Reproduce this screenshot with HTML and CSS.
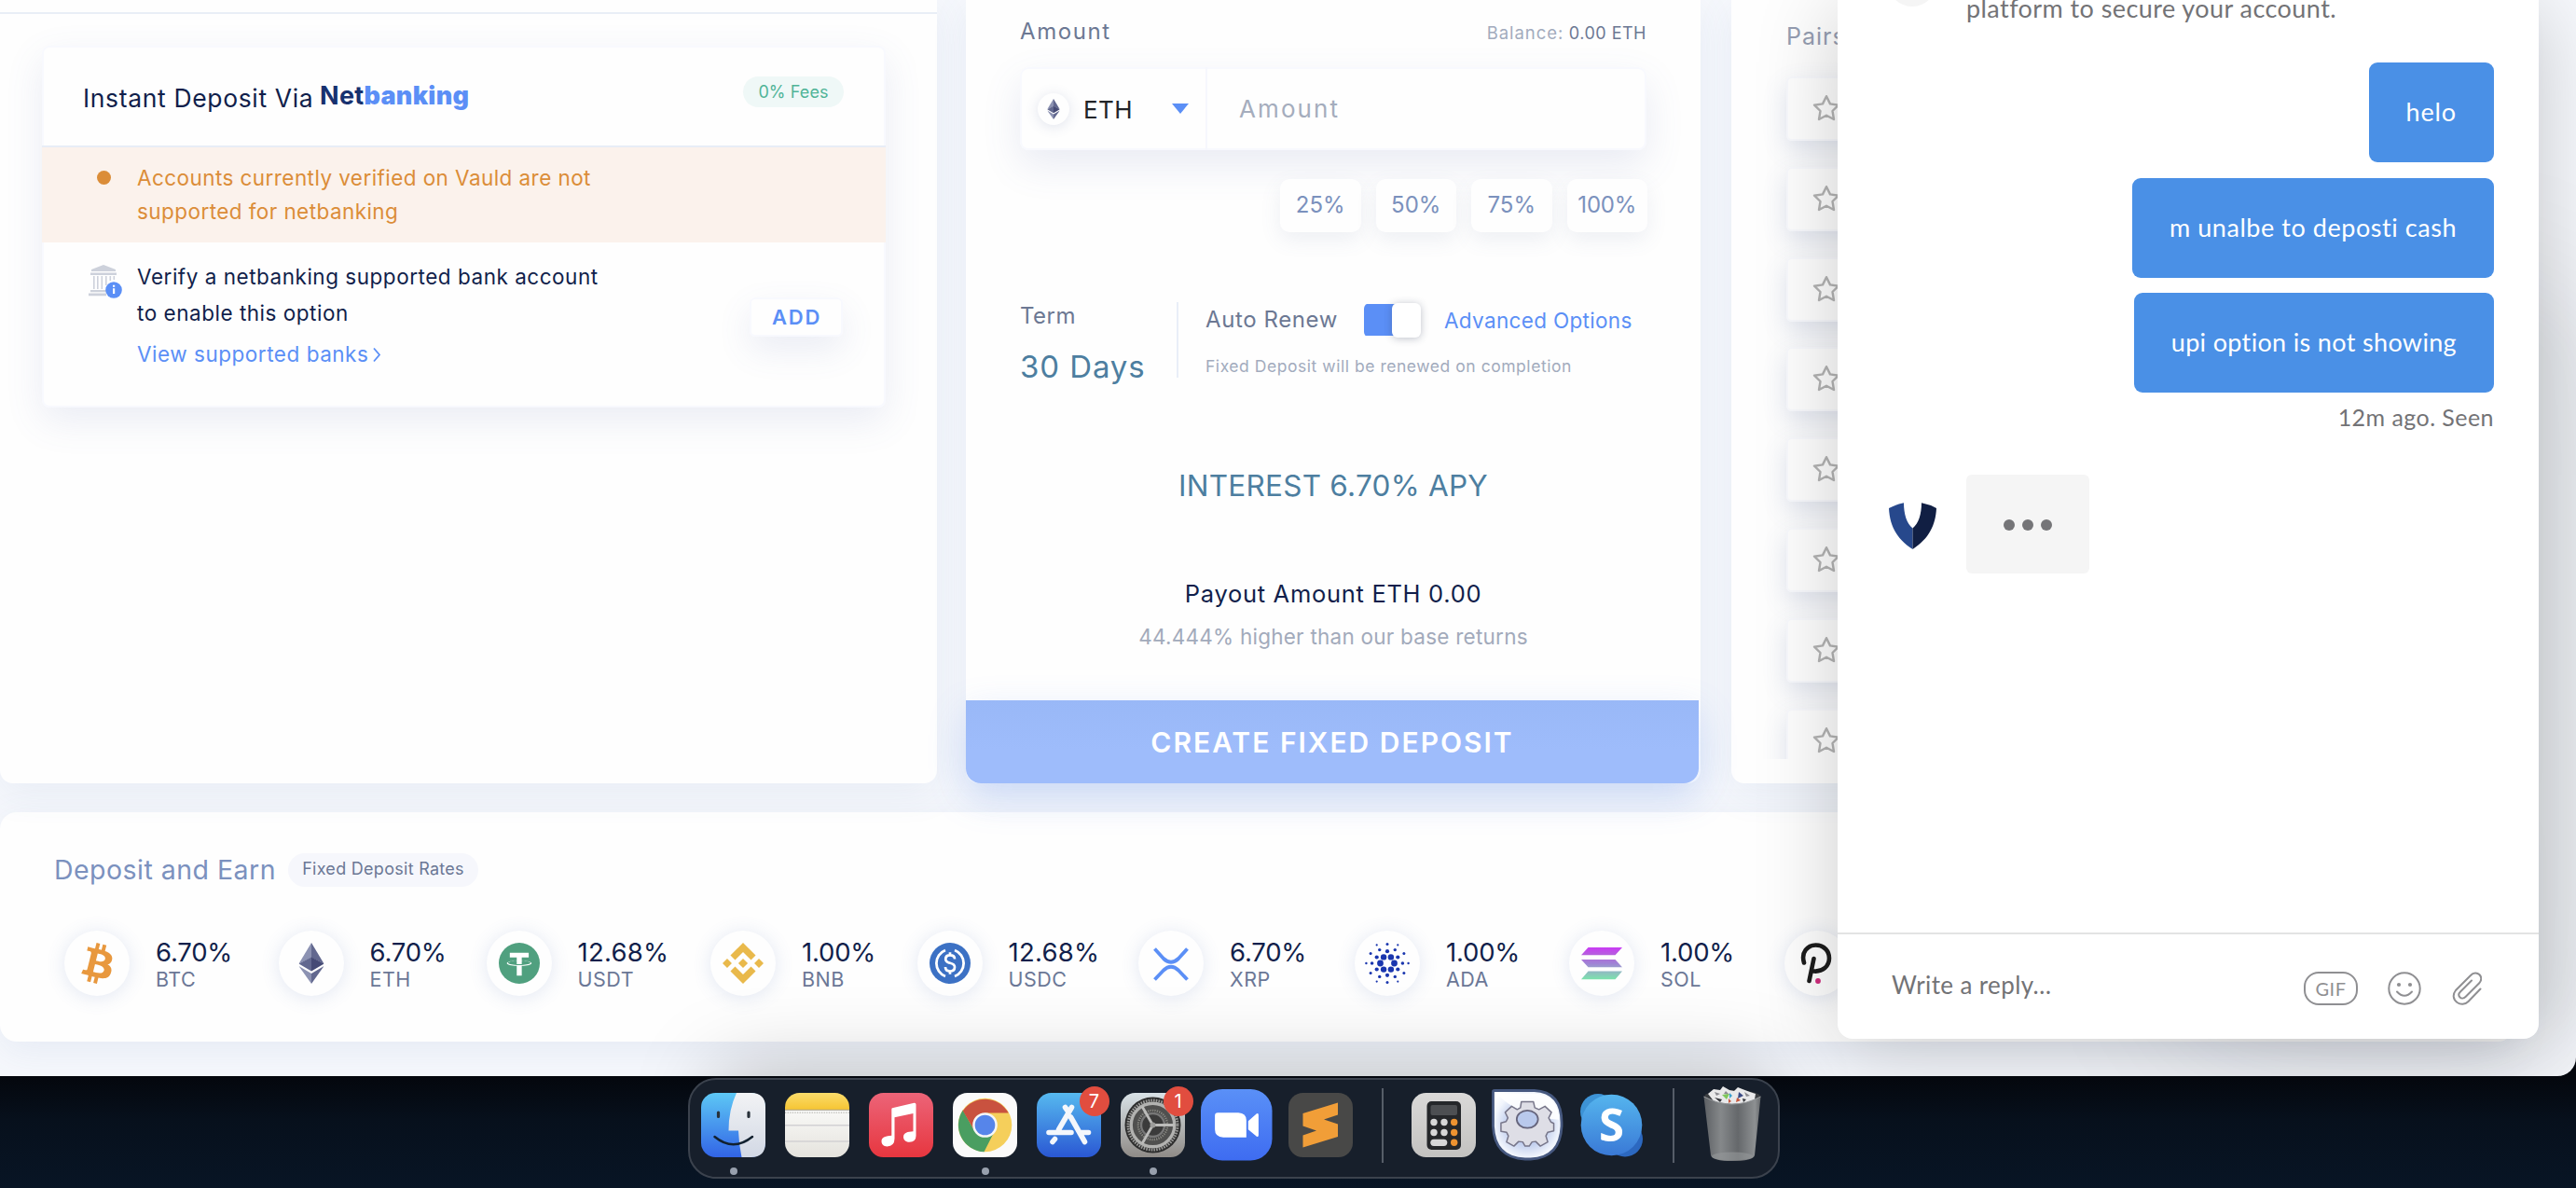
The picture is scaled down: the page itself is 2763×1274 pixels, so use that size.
FILE: index.html
```html
<!DOCTYPE html>
<html lang="en">
<head>
<meta charset="utf-8">
<title>Vauld</title>
<link rel="stylesheet" href="styles.css">
</head>
<body>
<svg class="defs" width="0" height="0" aria-hidden="true">
  <defs>
    <symbol id="eth" viewBox="0 0 27 44">
      <path fill="#8c92b2" d="M13.5 0 0 22.5 13.5 16z"/>
      <path fill="#62688f" d="M13.5 0 27 22.5 13.5 16z"/>
      <path fill="#62688f" d="M0 22.5 13.5 15.5V30.5z"/>
      <path fill="#454a75" d="M27 22.5 13.5 15.5V30.5z"/>
      <path fill="#8c92b2" d="M0 25 13.5 33V44z"/>
      <path fill="#62688f" d="M27 25 13.5 33V44z"/>
    </symbol>
    <symbol id="star" viewBox="0 0 30 30">
      <path fill="none" stroke="#b4b4b4" stroke-width="2.4" stroke-linejoin="round" d="M15 2.2 19 10.4 28 11.7 21.5 18 23 27 15 22.7 7 27 8.5 18 2 11.7 11 10.4z"/>
    </symbol>
  </defs>
</svg>

<div class="window">
  <main class="columns">
    <section class="panel deposit">
      <div class="tabs-edge"></div>
      <div class="netbank">
        <header class="netbank-head">
          <h2 class="netbank-title">Instant Deposit Via</h2>
          <span class="netbank-brand">Net<b>banking</b></span>
          <span class="fees">0% Fees</span>
        </header>
        <div class="notice"><i class="notice-dot"></i><p>Accounts currently verified on Vauld are not<br>supported for netbanking</p></div>
        <div class="verify">
          <svg class="bank" viewBox="0 0 36 36">
            <g fill="#cdd1db"><path d="M16 0 29 5v2H3V5z"/><path d="M2 8.5h28v2.5H2z"/><path d="M5 12h1.6v14H5zM9 12h1.6v14H9zM13.5 12h1.6v14h-1.6zM18 12h1.6v10H18zM22.5 12h1.6v5h-1.6zM26.5 12h1.6v4h-1.6z"/><path d="M2 27h17v2.3H2zM0 30.6h19v2.6H0z"/></g>
            <circle cx="27" cy="27" r="8.8" fill="#5b8ff6"/><path d="M26 25.3h2.2V31H26zM26 21.8h2.2v2H26z" fill="#fff"/>
          </svg>
          <div class="verify-body">
            <p>Verify a netbanking supported bank account<br>to enable this option</p>
            <a class="view">View supported banks<svg viewBox="0 0 10 16"><path d="M2 1l6 7-6 7" fill="none" stroke="#5b8ff6" stroke-width="1.8"/></svg></a>
          </div>
          <button class="add">ADD</button>
        </div>
      </div>
    </section>

    <section class="panel fixed">
      <div class="fixed-body">
        <div class="amount-row"><span class="label amount-label">Amount</span><span class="balance"><i>Balance:</i> 0.00 ETH</span></div>
        <div class="amount-box">
          <div class="coin-select">
            <span class="coin-mini"><svg viewBox="0 0 27 44"><use href="#eth"/></svg></span>
            <span class="coin-name">ETH</span><i class="caret"></i>
          </div>
          <span class="placeholder">Amount</span>
        </div>
        <div class="pcts"><span>25%</span><span>50%</span><span>75%</span><span class="full">100%</span></div>
        <div class="term-row">
          <div class="term"><span class="label term-label">Term</span><span class="days">30 Days</span></div>
          <div class="renew">
            <div class="renew-top"><span class="label renew-label">Auto Renew</span><span class="toggle"><i></i></span><a class="advanced">Advanced Options</a></div>
            <p class="renew-note">Fixed Deposit will be renewed on completion</p>
          </div>
        </div>
        <p class="interest">INTEREST 6.70% APY</p>
        <p class="payout">Payout Amount ETH 0.00</p>
        <p class="higher">44.444% higher than our base returns</p>
      </div>
      <button class="create">CREATE FIXED DEPOSIT</button>
    </section>

    <section class="panel pairs">
      <p class="pairs-title">Pairs</p>
      <div class="pair-list">
        <div class="pair"><svg><use href="#star"/></svg></div>
        <div class="pair"><svg><use href="#star"/></svg></div>
        <div class="pair"><svg><use href="#star"/></svg></div>
        <div class="pair"><svg><use href="#star"/></svg></div>
        <div class="pair"><svg><use href="#star"/></svg></div>
        <div class="pair"><svg><use href="#star"/></svg></div>
        <div class="pair"><svg><use href="#star"/></svg></div>
        <div class="pair"><svg><use href="#star"/></svg></div>
      </div>
    </section>
  </main>

  <section class="earn">
    <header class="earn-head"><h2>Deposit and Earn</h2><span>Fixed Deposit Rates</span></header>
    <div class="coins">
      <div class="coin"><span class="disc"><svg viewBox="5.8 6 20 20"><path fill="#e8983e" d="M23.189 14.02c.314-2.096-1.283-3.223-3.465-3.975l.708-2.84-1.728-.43-.69 2.765c-.454-.114-.92-.22-1.385-.326l.695-2.783L15.596 6l-.708 2.839c-.376-.086-.746-.17-1.104-.26l.002-.009-2.384-.595-.46 1.846s1.283.294 1.256.312c.7.175.826.638.805 1.006l-.806 3.235c.048.012.11.03.18.057l-.183-.045-1.13 4.532c-.086.212-.303.531-.793.41.018.025-1.256-.313-1.256-.313l-.858 1.978 2.25.561c.418.105.828.215 1.231.318l-.715 2.872 1.727.43.708-2.84c.472.127.93.245 1.378.357l-.706 2.828 1.728.43.715-2.866c2.948.558 5.164.333 6.097-2.333.752-2.146-.037-3.385-1.588-4.192 1.13-.26 1.98-1.003 2.207-2.538zm-3.95 5.538c-.533 2.147-4.148.986-5.32.695l.95-3.805c1.172.293 4.929.872 4.37 3.11zm.535-5.569c-.487 1.953-3.495.96-4.47.717l.86-3.45c.975.243 4.118.696 3.61 2.733z"/></svg></span><p><b class="r4">6.70%</b><span>BTC</span></p></div>
      <div class="coin"><span class="disc"><svg viewBox="0 0 27 44"><use href="#eth"/></svg></span><p><b class="r4">6.70%</b><span>ETH</span></p></div>
      <div class="coin"><span class="disc"><svg viewBox="0 0 32 32"><circle cx="16" cy="16" r="16" fill="#50a07f"/><path fill="#fff" d="M17.922 17.383v-.002c-.11.008-.677.042-1.942.042-1.01 0-1.721-.03-1.971-.042v.003c-3.888-.171-6.79-.848-6.79-1.658 0-.809 2.902-1.486 6.79-1.66v2.644c.254.018.982.061 1.988.061 1.207 0 1.812-.05 1.925-.06v-2.643c3.88.173 6.775.85 6.775 1.658 0 .81-2.895 1.485-6.775 1.657m0-3.59v-2.366h5.414V7.819H8.595v3.608h5.414v2.365c-4.4.202-7.709 1.074-7.709 2.118 0 1.044 3.309 1.915 7.709 2.118v7.582h3.913v-7.584c4.393-.202 7.694-1.073 7.694-2.116 0-1.043-3.301-1.914-7.694-2.117"/></svg></span><p><b class="r5">12.68%</b><span>USDT</span></p></div>
      <div class="coin"><span class="disc"><svg viewBox="6 6 20 20"><path fill="#e9b94b" d="M12.116 14.404L16 10.52l3.886 3.886 2.26-2.26L16 6l-6.144 6.144 2.26 2.26zM6 16l2.26-2.26L10.52 16l-2.26 2.26L6 16zm6.116 1.596L16 21.48l3.886-3.886 2.26 2.259L16 26l-6.144-6.144-.003-.003 2.263-2.257zM21.48 16l2.26-2.26L26 16l-2.26 2.26L21.48 16zM16 13.7l2.3 2.3-2.3 2.3-2.3-2.3z"/></svg></span><p><b class="r4">1.00%</b><span>BNB</span></p></div>
      <div class="coin"><span class="disc"><svg viewBox="0 0 44 44"><circle cx="22" cy="22" r="22" fill="#3c71c4"/><path d="M17 8a15 15 0 0 0 0 28M27 8a15 15 0 0 1 0 28" fill="none" stroke="#fff" stroke-width="2.8"/><path d="M27 17.5C27 14.5 24.8 13.4 22 13.4S17.2 15 17.2 17.6C17.2 23.6 27 20 27 26C27 29 24.8 30.5 22 30.5S17 29 17 26M22 10.2V13.5M22 30.5V33.8" fill="none" stroke="#fff" stroke-width="2.7"/></svg></span><p><b class="r5">12.68%</b><span>USDC</span></p></div>
      <div class="coin"><span class="disc"><svg viewBox="0 0 44 44"><path d="M4.5 6.5 14 17Q22 24.5 30 17L39.5 6.500M4.5 39.5 14 29.5Q22 22 30 29.5L39.5 39.5" fill="none" stroke="#5b8ff6" stroke-width="3.8"/></svg></span><p><b class="r4">6.70%</b><span>XRP</span></p></div>
      <div class="coin"><span class="disc"><svg viewBox="-24 -22 48 44" class="wide"><g fill="#1a36ae"><circle cx="-7.5" r="3.4"/><circle cx="7.5" r="3.4"/><circle cx="-3.9" cy="-6.6" r="3.2"/><circle cx="3.9" cy="-6.6" r="3.2"/><circle cx="-3.9" cy="6.6" r="3.2"/><circle cx="3.9" cy="6.6" r="3.2"/><circle cx="-11.3" cy="-6.5" r="2.1"/><circle cx="11.3" cy="-6.5" r="2.1"/><circle cx="-11.3" cy="6.5" r="2.1"/><circle cx="11.3" cy="6.5" r="2.1"/><circle cy="-12.8" r="2.1"/><circle cy="12.8" r="2.1"/><circle cx="-16.4" r="1.8"/><circle cx="16.4" r="1.8"/><circle cx="-8.3" cy="-14.4" r="1.7"/><circle cx="8.3" cy="-14.4" r="1.7"/><circle cx="-8.3" cy="14.4" r="1.7"/><circle cx="8.3" cy="14.4" r="1.7"/><circle cx="-17.9" cy="-10.4" r="1.5"/><circle cx="17.9" cy="-10.4" r="1.5"/><circle cx="-17.9" cy="10.4" r="1.5"/><circle cx="17.9" cy="10.4" r="1.5"/><circle cy="-20.5" r="1.5"/><circle cy="20.5" r="1.5"/><circle cx="-22.6" r="1.2"/><circle cx="22.6" r="1.2"/><circle cx="-11.3" cy="-19.6" r="1.1"/><circle cx="11.3" cy="-19.6" r="1.1"/><circle cx="-11.3" cy="19.6" r="1.1"/><circle cx="11.3" cy="19.6" r="1.1"/></g></svg></span><p><b class="r4">1.00%</b><span>ADA</span></p></div>
      <div class="coin"><span class="disc"><svg viewBox="0 0 44 44"><defs><linearGradient id="sol" x1="0" y1="0" x2="0" y2="1"><stop offset="0" stop-color="#c93af4"/><stop offset=".28" stop-color="#b169d8"/><stop offset=".5" stop-color="#a081d6"/><stop offset=".72" stop-color="#95b3c6"/><stop offset="1" stop-color="#7be3ac"/></linearGradient></defs><path fill="url(#sol)" d="M7.5 5H44l-7.5 8.300H0zM0 18h36.500L44 26.200H7.500zM7.500 30.500H44L36.500 39.200H0z"/></svg></span><p><b class="r4">1.00%</b><span>SOL</span></p></div>
      <div class="coin"><span class="disc"><svg viewBox="0 0 44 44"><path d="M8 21.5C4.5 10 12 2.5 20.5 2.5C30 2.5 35 9.5 35 16.5C35 25 28 31.5 18.5 30.500M18.500 17 13.500 41" fill="none" stroke="#1c1c1c" stroke-width="4.6" stroke-linecap="round"/><circle cx="23" cy="41" r="2.9" fill="#cf2c7c"/></svg></span></div>
    </div>
  </section>

  <div class="dock-shade"></div>
  <div class="chat-glow"></div>

  <aside class="chat">
    <div class="thread">
      <div class="msg-in">platform to secure your account.</div>
      <i class="old-avatar"></i>
      <div class="bubble b1">helo</div>
      <div class="bubble b2">m unalbe to deposti cash</div>
      <div class="bubble b3">upi option is not showing</div>
      <div class="seen">12m ago. Seen</div>
      <div class="typing-row">
        <svg class="vlogo" viewBox="0 0 51 49" preserveAspectRatio="none"><path fill="#27488c" d="M0 6Q7 2 16 .3C16 12 19 22 25.500 27V49C8 38 1 24 0 6z"/><path fill="#111f43" d="M51 6Q44 2 35 .3C35 12 32 22 25.500 27V49C43 38 50 24 51 6z"/></svg>
        <div class="typing"><i></i><i></i><i></i></div>
      </div>
    </div>
    <footer class="reply">
      <span class="reply-text">Write a reply…</span>
      <span class="gif">GIF</span>
      <svg class="smile" viewBox="0 0 36 36"><g fill="none" stroke="#8f8f92" stroke-width="2"><circle cx="18" cy="18" r="16.7"/><path d="M10 21.5Q18 30 26 21.5" stroke-linecap="round"/></g><circle cx="12" cy="14" r="2.1" fill="#8f8f92"/><circle cx="24" cy="14" r="2.1" fill="#8f8f92"/></svg>
      <svg class="clip" viewBox="0 0 32 36"><path d="M30.5 18.5 17.5 32C14 35.5 9 35.5 5.5 33C1 29.5 .5 24.5 4 20L20 4C23 .8 27 .8 29.5 3.3C32 6 31.6 9.5 29 12.5L14.5 27C12.5 29 10 29 8.5 27.5C7 26 7 23.5 9 21.5L21 9.5" fill="none" stroke="#8f8f92" stroke-width="2" stroke-linecap="round"/></svg>
    </footer>
  </aside>
</div>

<nav class="dock">
  <div class="slot run"><svg class="app" viewBox="0 0 69 69"><defs><linearGradient id="fb" x1="0" y1="0" x2="0" y2="1"><stop offset="0" stop-color="#5dc8f5"/><stop offset="1" stop-color="#3264e6"/></linearGradient><linearGradient id="fw" x1="0" y1="0" x2="0" y2="1"><stop offset="0" stop-color="#f2f3f5"/><stop offset="1" stop-color="#d2d8e4"/></linearGradient></defs><rect width="69" height="69" rx="15.5" fill="url(#fb)"/><path fill="url(#fw)" d="M38 0H53.500Q69 0 69 15.500V53.500Q69 69 53.500 69H43.500Q40.500 55 40 40.500H29.500Q29.500 18 38 0z"/><path d="M18.500 21v4.500M51 21v4.500" stroke="#283139" stroke-width="3.2" stroke-linecap="round"/><path d="M14.500 47Q34.500 63.500 55 47" fill="none" stroke="#12212f" stroke-width="2.5" stroke-linecap="round"/></svg></div>
  <div class="slot"><svg class="app" viewBox="0 0 69 69"><defs><clipPath id="rc"><rect width="69" height="69" rx="15.5"/></clipPath><linearGradient id="ny" x1="0" y1="0" x2="0" y2="1"><stop offset="0" stop-color="#fbdc6b"/><stop offset="1" stop-color="#f6c533"/></linearGradient><linearGradient id="nw" x1="0" y1="0" x2="0" y2="1"><stop offset="0" stop-color="#f9f9f7"/><stop offset="1" stop-color="#e5e3dd"/></linearGradient></defs><g clip-path="url(#rc)"><path fill="url(#nw)" d="M0 17h69v52H0z"/><path fill="url(#ny)" d="M0 0h69v18H0z"/><path stroke="#a9a18a" d="M0 18.300h69"/><path stroke="#c4c3bf" stroke-width="1.4" stroke-dasharray="1.3 1.3" d="M0 21.300h69"/><path stroke="#d2d1d3" stroke-width="1.4" d="M0 34.700h69M0 52h69"/></g></svg></div>
  <div class="slot"><svg class="app" viewBox="0 0 69 69"><defs><linearGradient id="mu" x1="0" y1="0" x2="0" y2="1"><stop offset="0" stop-color="#ec6478"/><stop offset="1" stop-color="#e7363f"/></linearGradient></defs><rect width="69" height="69" rx="15.5" fill="url(#mu)"/><path fill="#fff" d="M25 16.200 48.500 10.700Q50.500 10.400 50.500 12.400V46Q50.500 52.500 43.500 52.700C39 52.700 37 50 37 47.200C37 42.500 41.500 41.600 47.500 41.200V22L27.500 26.200V49Q27.500 57 19.500 57.400C15.500 57.400 13.500 55 13.500 52C13.500 47 18.500 46.300 24.300 45.700V18Q24.300 16.500 25 16.200z"/></svg></div>
  <div class="slot run"><svg class="app" viewBox="0 0 69 69"><rect width="69" height="69" rx="15.5" fill="#fafafa"/><circle cx="34.5" cy="34.5" r="28.8" fill="#f5cf5b"/><path fill="#4a9e61" d="M34.500 34.500 44.300 42 33.500 63.300A28.800 28.800 0 0 1 10.800 18.500L23.300 41z"/><path fill="#c9523f" d="M10.800 19.200A28.800 28.800 0 0 1 59.700 21.500H34.500L23 40z"/><circle cx="34.5" cy="34.5" r="13.3" fill="#f6f6f6"/><circle cx="34.5" cy="34.5" r="10.8" fill="#5685ea"/></svg></div>
  <div class="slot"><svg class="app" viewBox="0 0 69 69"><defs><linearGradient id="as" x1="0" y1="0" x2="0" y2="1"><stop offset="0" stop-color="#56b9ef"/><stop offset="1" stop-color="#2a57d3"/></linearGradient></defs><rect width="69" height="69" rx="15.5" fill="url(#as)"/><g stroke="#f4f7fc" stroke-width="5.6" stroke-linecap="round"><path d="M37.500 15.500 23.500 39.500M30.500 15.500 33 19M36.500 26 51.500 52.500M13 42.500H37M46 42.500H55.500M19.500 49.500 17 52.500"/></g></svg><em class="badge">7</em></div>
  <div class="slot run"><svg class="app" viewBox="0 0 69 69"><defs><linearGradient id="st" x1="0" y1="0" x2="0" y2="1"><stop offset="0" stop-color="#d9e2e7"/><stop offset="1" stop-color="#8f8b87"/></linearGradient></defs><rect width="69" height="69" rx="15.5" fill="url(#st)"/><circle cx="34.5" cy="34.5" r="30" fill="#2e2e2e"/><circle cx="34.5" cy="34.5" r="26.5" fill="none" stroke="#9a9a98" stroke-width="3" stroke-dasharray="1.6 1.17"/><circle cx="34.5" cy="34.5" r="23.3" fill="#50504f" stroke="#b2b2b0" stroke-width="3.4"/><circle cx="34.5" cy="34.5" r="15.5" fill="#3b3b3b" stroke="#84847f" stroke-width="2.6" stroke-dasharray="1.4 1"/><circle cx="34.5" cy="34.5" r="12.5" fill="none" stroke="#777" stroke-width="2.4"/><path d="M34.500 34.500 23 14.500M34.500 34.500H57.800M34.500 34.500 23 54.500" stroke="#bcbcba" stroke-width="2.8"/><circle cx="34.5" cy="34.5" r="3" fill="#9c9c9a"/></svg><em class="badge">1</em></div>
  <div class="slot"><svg class="app big" viewBox="0 0 76 76"><defs><linearGradient id="zo" x1="0" y1="0" x2="0" y2="1"><stop offset="0" stop-color="#5a90f7"/><stop offset="1" stop-color="#3e6cf1"/></linearGradient></defs><rect width="76" height="76" rx="23" fill="url(#zo)"/><path fill="#fff" d="M18 25H40Q48.500 25.500 48.500 33V51.500H24Q15 51 15 43V28Q15 25 18 25zM50.500 34 59.500 26Q61.500 25 61.500 27.500V49Q61.500 51.500 59.500 50.500L50.500 43z"/></svg></div>
  <div class="slot"><svg class="app" viewBox="0 0 69 69"><rect width="69" height="69" rx="15.5" fill="#484847"/><path fill="#d9832a" d="M30 40.500 53 47V44L38 38z"/><path fill="#f19e38" d="M15.500 22 53 10.500V23.500L38 28.500 53 33.500V47L15.500 58.500V45.500L30 40.500 15.500 35.500z"/></svg></div>
  <i class="sep"></i>
  <div class="slot"><svg class="app" viewBox="0 0 69 69"><defs><linearGradient id="ca" x1="0" y1="0" x2="0" y2="1"><stop offset="0" stop-color="#dad9d8"/><stop offset="1" stop-color="#c3c2c0"/></linearGradient></defs><rect width="69" height="69" rx="15.5" fill="url(#ca)"/><rect x="16.5" y="9" width="36.5" height="52" rx="5" fill="#25272a"/><rect x="20.5" y="13" width="28.5" height="11" rx="2" fill="#4d4f52"/><g fill="#d7d7d7"><circle cx="24" cy="31.5" r="3.7"/><circle cx="35" cy="31.5" r="3.7"/><circle cx="24" cy="42.5" r="3.7"/><circle cx="35" cy="42.5" r="3.7"/><rect x="20.3" y="49.7" width="18" height="7.2" rx="3.6"/></g><g fill="#ee9330"><circle cx="45.7" cy="31.5" r="3.7"/><circle cx="45.7" cy="42.5" r="3.7"/><circle cx="45.7" cy="53.3" r="3.7"/></g></svg></div>
  <div class="slot"><svg class="app big" viewBox="0 0 77 77"><defs><radialGradient id="gb" cx=".5" cy=".5" r=".6"><stop offset=".35" stop-color="#aebfe8"/><stop offset=".8" stop-color="#f1f5fc"/><stop offset="1" stop-color="#fff"/></radialGradient></defs><path d="M1.500 3Q1.500 1.500 3 1.500H46Q75.500 3 75.500 36V40Q74 74 42 75.500H36Q3 74 1.500 40z" fill="url(#gb)" stroke="#46587f" stroke-width="2.8"/><path fill="#fff" d="M4.500 4.500H45Q72 6 72.500 33Q30 30 4.500 4.500z" opacity=".9"/><path fill="#dedee6" stroke="#77768a" stroke-width="1.5" stroke-linejoin="round" d="M32 13.500H45L46.500 20 51 22 57.500 18.500 64.500 25 61.500 31 64 35.500 67 37V45L60.500 46.500 58.500 50.500 60.500 57 52.500 61.500 47.500 56.500 43.500 57 40.500 61.500H36L33.500 57 29 56.500 24 61.500 16 57 18 50.500 16 46.500 10 45.500V36.500L15.500 35 17.500 31 14.500 25 21.500 18.500 27.500 22 31 20z"/><ellipse cx="38.5" cy="32.5" rx="11.5" ry="9.5" fill="#b9c9ec" stroke="#66657c" stroke-width="1.8"/></svg></div>
  <div class="slot"><svg class="app" viewBox="0 0 69 69"><defs><linearGradient id="sk" x1="0" y1="0" x2="0" y2="1"><stop offset="0" stop-color="#55b5ee"/><stop offset="1" stop-color="#3a79d6"/></linearGradient></defs><circle cx="20" cy="20" r="19" fill="#3d93d6"/><circle cx="49" cy="49.5" r="19" fill="#2c68c0"/><circle cx="34.5" cy="34.5" r="32.8" fill="url(#sk)"/><text x="34.5" y="52" text-anchor="middle" class="skype-s">S</text></svg></div>
  <i class="sep"></i>
  <div class="slot last"><svg class="trash" viewBox="0 0 62 80"><defs><linearGradient id="tr" x1="0" y1="0" x2="1" y2="0"><stop offset="0" stop-color="#5d6064"/><stop offset=".3" stop-color="#85888a"/><stop offset=".6" stop-color="#65686b"/><stop offset=".9" stop-color="#8d9092"/><stop offset="1" stop-color="#66696c"/></linearGradient></defs><ellipse cx="31" cy="11" rx="30" ry="7" fill="#3a3d41"/><path fill="#e9e9ea" d="M5 8 11 3 18 4 21 0 28 4 33 5 37 1 42 3 50 6 56 8 55 14 45 18 30 19 12 17z"/><path fill="#8b8b90" d="M12 6 18 8 14 10zM24 5 28 9 22 8zM44 6 50 10 46 11z"/><path fill="#3b4b83" d="M38 6 43 10 37 13z"/><path fill="#7fc85c" d="M20 9 28 8 25 14z"/><path fill="#38a0d0" d="M28 7 31 10 28 13z"/><path fill="#c8583d" d="M36 12 40 15 35 17zM27 13 30 16 27 18z"/><path fill="#33353a" d="M12 12 20 14 18 17zM42 13 46 14 43 17z"/><path fill="url(#tr)" d="M.5 11Q31 27 61.500 11L55 74Q53 80 31 80Q10 80 8 74z"/><path d="M.5 11Q31 27 61.500 11" fill="none" stroke="#9a9da0"/><ellipse cx="31" cy="75" rx="22" ry="4.5" fill="#94979a" opacity=".6"/></svg></div>
</nav>
</body>
</html>
```

FILE: styles.css
```css
* { box-sizing: border-box; margin: 0; padding: 0; }
i, em { font-style: normal; }

body {
  width: 2763px;
  height: 1274px;
  overflow: hidden;
  position: relative;
  font-family: Inter, "Liberation Sans", sans-serif;
  color: #111f4b;
  background: linear-gradient(#04070d 1154px, #07101c 1200px, #081525 1274px);
  white-space: nowrap;
}
button { font: inherit; border: 0; }
.defs { position: absolute; }

.window {
  position: relative;
  height: 1154px;
  overflow: hidden;
  background: #f6f8fc;
  border-radius: 0 0 20px 0;
}

/* dashboard columns */
.columns {
  display: grid;
  grid-template-columns: 1005px 788px 840px;
  column-gap: 31px;
  height: 840px;
}
.panel { background: #fefefe; border-radius: 0 0 14px 14px; box-shadow: 0 10px 40px rgba(90, 120, 180, .09); }
.panel.pairs { margin-left: 2px; }

.tabs-edge { height: 15px; border-bottom: 2px solid #e9eef6; }
.netbank {
  margin: 34px 55px 0 45px;
  height: 388px;
  border-radius: 8px;
  background: #fefefe;
  box-shadow: 0 0 0 2px #f8f9fe inset, 0 14px 40px rgba(90, 110, 170, .12);
}
.netbank-head {
  display: flex;
  align-items: flex-start;
  height: 109px;
  padding: 33px 45px 0 44px;
  border-bottom: 2px solid #e8edf7;
}
.netbank-title { font-size: 26.5px; line-height: 36px; font-weight: 400; letter-spacing: .65px; margin-top: 5px; width: 254px; }
.netbank-brand { font-size: 27px; line-height: 36px; font-weight: 700; letter-spacing: .3px; color: #17316f; margin-top: 3px; }
.netbank-brand b { color: #5b8ff6; }
.fees {
  margin-left: auto;
  width: 108px;
  height: 33px;
  border-radius: 17px;
  background: #eff8f7;
  color: #4fb498;
  font-size: 18px;
  line-height: 33px;
  letter-spacing: .1px;
  text-align: center;
}
.notice {
  display: flex;
  height: 102px;
  padding: 15px 0 0 59px;
  gap: 28px;
  background: #fbf2ec;
  color: #db8d38;
  font-size: 22.5px;
  line-height: 36px;
  letter-spacing: .43px;
}
.notice-dot { width: 15px; height: 15px; margin-top: 10px; border-radius: 50%; background: #db8d38; }
.verify { display: flex; padding: 17px 46px 0 50px; }
.bank { width: 36px; height: 36px; margin-top: 7px; }
.verify-body { margin-left: 16px; font-size: 22.5px; line-height: 39px; letter-spacing: .52px; }
.view { display: flex; align-items: center; margin-top: 7px; line-height: 36px; color: #5b8ff6; }
.view svg { width: 10px; height: 17px; margin-left: 4px; }
.add {
  margin: 42px 0 0 auto;
  width: 100px;
  height: 42px;
  border-radius: 6px;
  background: #fefefe;
  box-shadow: 0 0 0 2px #f8f9fe inset, 0 14px 36px rgba(90, 110, 170, .12);
  color: #5b8ff6;
  font-size: 22px;
  font-weight: 600;
  letter-spacing: 1.8px;
  text-indent: 1px;
}

/* fixed deposit form */
.fixed { position: relative; display: flex; flex-direction: column; }
.fixed-body { height: 751px; padding: 19px 58px 0; }
.label { color: #6c7893; font-size: 24px; line-height: 30px; }
.amount-row { display: flex; justify-content: space-between; align-items: baseline; height: 30px; }
.amount-label { letter-spacing: 1.6px; }
.balance { font-size: 18px; letter-spacing: .5px; color: #6c7893; }
.balance i { color: #a2abbd; font-size: 18.5px; letter-spacing: .95px; }
.amount-box {
  display: flex;
  align-items: center;
  height: 89px;
  margin-top: 23px;
  border-radius: 9px;
  background: #fefefe;
  box-shadow: 0 0 0 2px #f8f9fe inset, 0 16px 40px rgba(90, 110, 170, .13);
}
.coin-select { display: flex; align-items: center; width: 201px; height: 89px; padding: 0 18px 0 19px; border-right: 2px solid #f6f7fd; }
.coin-mini { display: flex; justify-content: center; align-items: center; width: 34px; height: 34px; border-radius: 50%; box-shadow: 0 2px 14px rgba(70, 90, 140, .16); }
.coin-mini svg { width: 14px; height: 22px; }
.coin-name { margin-left: 15px; padding-top: 1px; font-size: 26px; letter-spacing: .4px; color: #222428; }
.caret { margin-left: auto; border: 9px solid transparent; border-top: 11px solid #5b8ff6; border-bottom: 0; }
.placeholder { margin-left: 34px; font-size: 26px; letter-spacing: 2.1px; color: #a5adbd; }
.pcts { display: flex; gap: 16px; justify-content: flex-end; height: 57px; margin: 31px -1px 0 0; }
.pcts span { width: 86.5px; border-radius: 10px; background: #fefefe; box-shadow: 0 8px 22px rgba(90, 110, 150, .10); font-size: 24px; line-height: 56px; text-align: center; color: #7b91bd; }
.pcts .full { letter-spacing: -.2px; }
.term-row { display: flex; height: 81px; margin-top: 75px; }
.term { width: 170px; height: 81px; border-right: 2px solid #e9eef8; display: flex; flex-direction: column; }
.term-label { letter-spacing: .5px; }
.days { margin-top: 19px; font-size: 33px; line-height: 40px; letter-spacing: .9px; color: #4d7ea0; }
.renew { margin-left: 29px; }
.renew-top { display: flex; align-items: center; height: 38px; }
.renew-label { letter-spacing: .6px; width: 170px; }
.toggle { width: 61px; height: 37px; display: flex; align-items: center; justify-content: flex-end; background: linear-gradient(#5b8ff6, #5b8ff6) 0 1px / 34px 34px no-repeat; border-radius: 6px; }
.toggle i { width: 31px; height: 37px; border-radius: 6px; background: #fff; box-shadow: 0 1px 8px rgba(40, 50, 80, .3); }
.advanced { margin-left: 25px; font-size: 22.5px; letter-spacing: .33px; color: #5b8ff6; }
.renew-note { margin-top: 19px; font-size: 17.5px; line-height: 24px; letter-spacing: .54px; color: #a2abbd; }
.interest, .payout, .higher { text-align: center; }
.interest { margin-top: 96px; font-size: 31.5px; line-height: 40px; letter-spacing: .25px; color: #4d7ea0; }
.payout { margin-top: 80px; font-size: 25.5px; line-height: 32px; letter-spacing: .7px; }
.higher { margin-top: 15px; font-size: 22.5px; line-height: 30px; letter-spacing: .24px; color: #a2aabb; }
.create {
  width: 786px;
  height: 89px;
  border-radius: 0 0 16px 16px;
  background: linear-gradient(#99b8f7, #9ebcfb 60%);
  box-shadow: 0 14px 40px rgba(91, 143, 246, .22);
  color: #fff;
  font-size: 30px;
  font-weight: 600;
  letter-spacing: 2px;
}

/* pairs list */
.pairs { padding: 23px 0 0 59px; }
.pairs-title { font-size: 25px; line-height: 32px; letter-spacing: 1px; color: #959db1; }
.pair-list { height: 759px; margin: 0 0 0 -40px; padding: 27px 0 0 40px; overflow: hidden; }
.pair { height: 69px; margin-bottom: 27.8px; padding: 19px 0 0 28px; border-radius: 6px 0 0 6px; background: #fefefe; box-shadow: 0 0 0 2px #f8f9fd inset, 0 10px 26px rgba(90, 110, 170, .17); }
.pair svg { display: block; width: 30px; height: 30px; }

/* deposit and earn */
.earn {
  height: 246px;
  margin-top: 31px;
  padding: 44px 0 0 58px;
  width: 2697px;
  border-radius: 18px;
  background: #fefefe;
  box-shadow: 0 10px 40px rgba(90, 120, 180, .10);
}
.earn-head { display: flex; height: 36px; }
.earn-head h2 { width: 251px; font-size: 28.5px; line-height: 36px; font-weight: 400; letter-spacing: .47px; color: #7b91be; }
.earn-head span { width: 204px; border-radius: 18px; background: #f6f7fc; font-size: 18px; line-height: 34px; letter-spacing: .28px; text-align: center; color: #6b7795; }
.coins { display: grid; grid-template-columns: 229.5px 223px 240.5px 221.5px 237.5px 232px 230px 231px 230px; margin: 47px 0 0 11px; }
.coin { display: flex; height: 70px; }
.disc { display: flex; align-items: center; justify-content: center; width: 70px; height: 70px; border-radius: 50%; background: #fefefe; box-shadow: 0 2px 20px rgba(80, 110, 180, .16); }
.disc svg { width: 44px; height: 44px; }
.disc .wide { width: 48px; }
.coin p { display: flex; flex-direction: column; margin: 7px 0 0 28px; }
.coin b { font-size: 27.5px; line-height: 33px; font-weight: 400; }
.r4 { letter-spacing: -.2px; }
.r5 { letter-spacing: .25px; }
.coin p span { font-size: 21.5px; line-height: 25px; letter-spacing: .5px; color: #6b7796; }

/* soft shade thrown on the window by the dock and the chat launcher */
.dock-shade { position: absolute; left: 780px; top: 1160px; width: 1110px; height: 90px; box-shadow: 0 0 90px 8px rgba(0, 0, 0, .26); }
.chat-glow { position: absolute; left: 2350px; top: 330px; width: 413px; height: 780px; border-radius: 60px; box-shadow: 0 0 160px 10px rgba(20, 25, 30, .13); background: rgba(20, 25, 30, .07); filter: blur(20px); }

/* messenger */
.chat {
  position: absolute;
  left: 1971px;
  top: 0;
  width: 752px;
  height: 1114px;
  border-radius: 0 0 16px 16px;
  background: #fff;
  box-shadow: 0 10px 90px rgba(0, 0, 0, .2);
  font-family: Lato, "Liberation Sans", sans-serif;
  display: flex;
  flex-direction: column;
}
.thread { position: relative; height: 1000px; padding: 0 48px 0 55px; display: flex; flex-direction: column; align-items: flex-end; }
.msg-in { align-self: flex-start; margin: -11px 0 0 83px; height: 78px; font-size: 27px; line-height: 40px; letter-spacing: .43px; color: #737376; }
.old-avatar { position: absolute; left: 54px; top: -45px; width: 52px; height: 52px; border-radius: 50%; background: #f5f5f5; }
.bubble { height: 107px; padding: 0 40px; margin-bottom: 16.5px; border-radius: 9px; background: #4a90e6; color: #fff; font-size: 27px; line-height: 105px; }
.b1 { letter-spacing: .85px; }
.b2 { letter-spacing: .55px; }
.b3 { letter-spacing: .34px; margin-bottom: 11px; }
.seen { font-size: 25px; line-height: 30px; letter-spacing: .45px; color: #737376; }
.typing-row { display: flex; align-self: flex-start; margin-top: 47px; }
.vlogo { width: 51px; height: 50px; margin-top: 30px; }
.typing { display: flex; align-items: center; justify-content: center; gap: 8px; margin-left: 32px; width: 132px; height: 106px; padding-top: 2px; border-radius: 6px; background: #f5f5f5; }
.typing i { width: 12px; height: 12px; border-radius: 50%; background: #757578; }
.reply { display: flex; align-items: center; height: 114px; padding: 4px 61px 0 58px; border-top: 2px solid #e3e4e4; color: #737376; }
.reply-text { font-size: 26px; letter-spacing: .38px; margin: -8px auto 0 0; }
.gif { width: 58px; height: 36px; border: 2px solid #8f8f92; border-radius: 16px; font-size: 20px; line-height: 33px; letter-spacing: .5px; text-align: center; color: #8f8f92; }
.smile { width: 36px; height: 36px; margin-left: 32px; }
.clip { width: 32px; height: 36px; margin-left: 33px; }

/* dock */
.dock {
  display: flex;
  align-items: center;
  width: 1171px;
  height: 108px;
  margin: 2px 0 0 737.5px;
  padding: 0 3px 7px 2px;
  border: 2px solid #3b424d;
  border-radius: 30px;
  background: #171f2b;
}
.slot { position: relative; display: flex; align-items: center; justify-content: center; width: 90px; height: 100px; }
.slot.last { width: 84px; }
.app { width: 69px; height: 69px; }
.app.big { width: 76.5px; height: 76.5px; }
.run::after { content: ""; position: absolute; left: 41px; bottom: -3px; width: 8px; height: 8px; border-radius: 50%; background: #98a0ad; }
.badge { position: absolute; left: 56px; top: 8px; width: 32px; height: 32px; border-radius: 50%; background: #e14d3f; color: #fff; font-size: 20px; line-height: 32px; text-align: center; }
.sep { width: 42px; height: 80px; background: linear-gradient(#565d68, #565d68) center / 2px 80px no-repeat; }
.trash { width: 62px; height: 80px; margin-top: -4px; }
.skype-s { font-family: "Open Sans", sans-serif; font-weight: 700; font-size: 49px; fill: #fff; }
```
